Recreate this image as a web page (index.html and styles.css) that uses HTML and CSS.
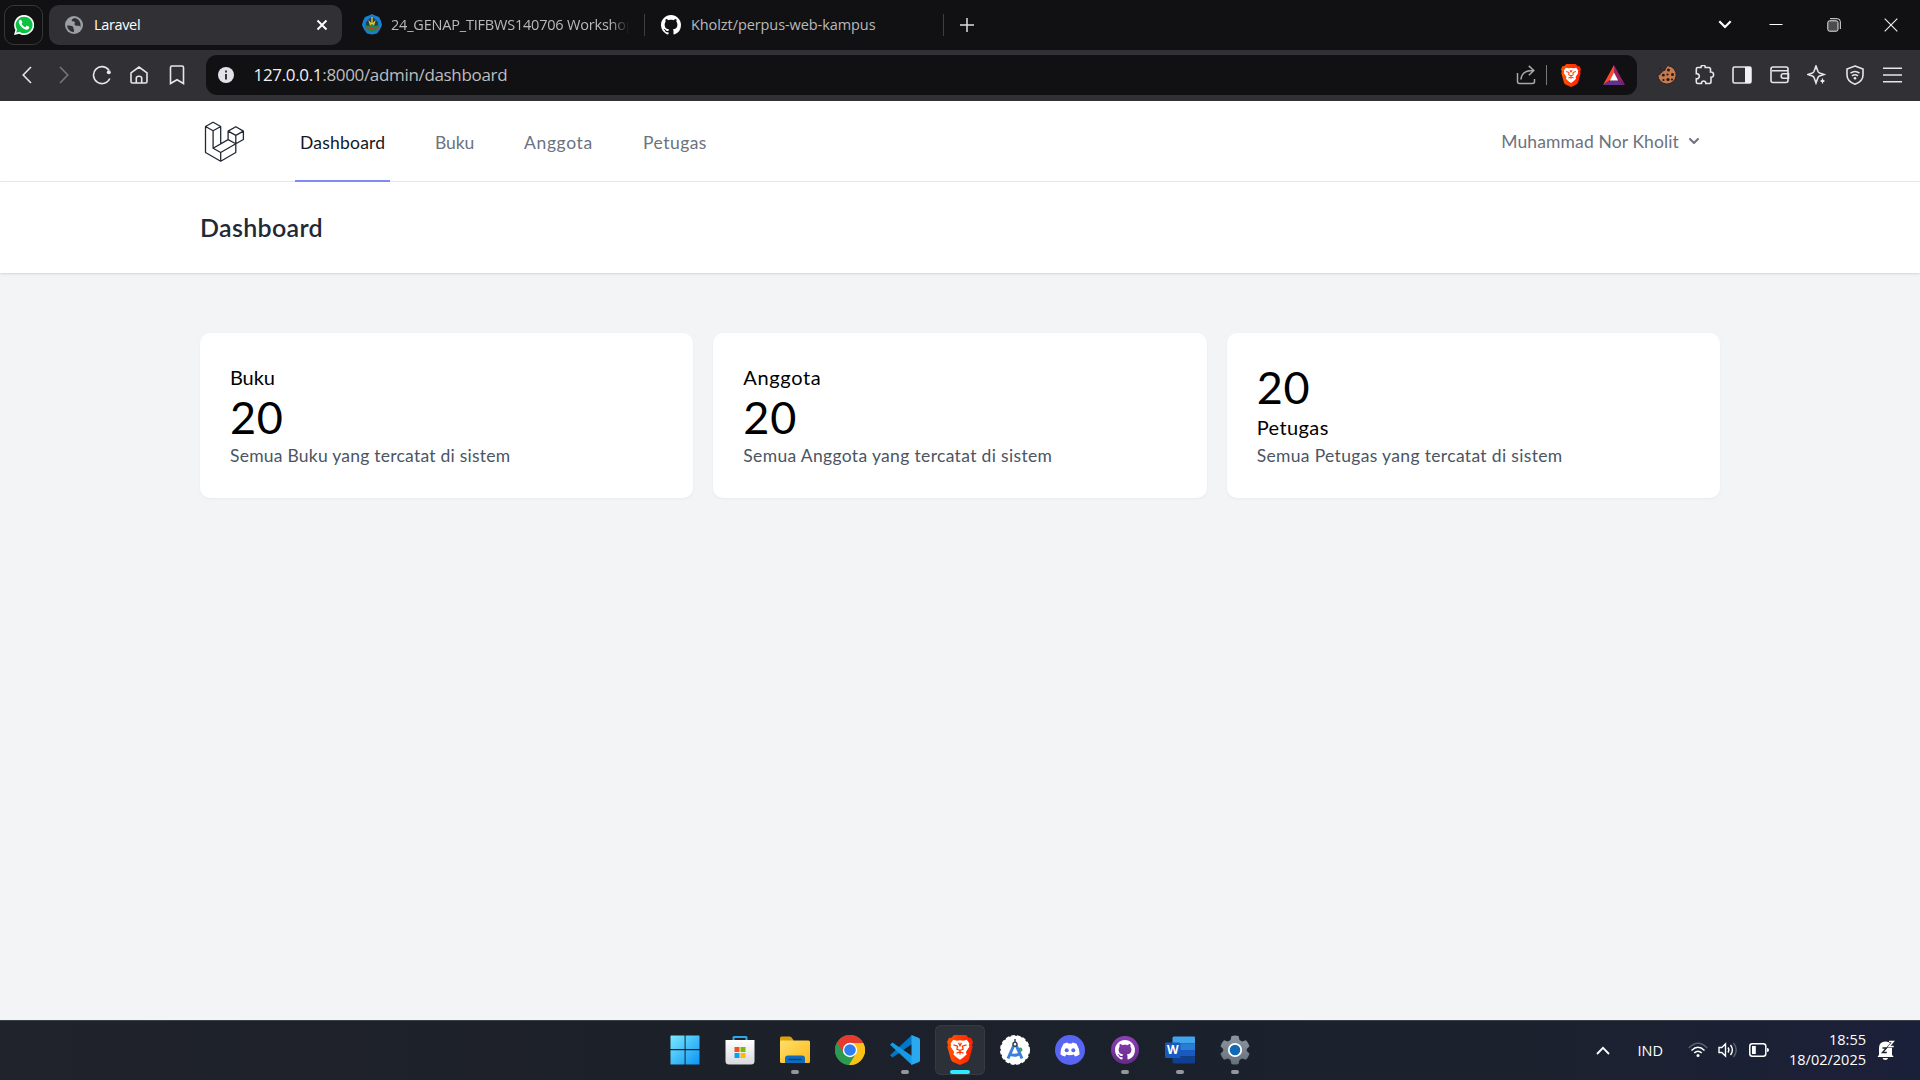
FILE: index.html
```html
<!DOCTYPE html>
<html lang="en">
<head>
<meta charset="utf-8">
<title>Laravel</title>
<link rel="stylesheet" href="styles.css">
</head>
<body>
<svg class="defs" width="0" height="0" aria-hidden="true">
  <defs>
    <linearGradient id="brave-g" x1="0" x2="1"><stop offset="0" stop-color="#ff5500"/><stop offset="1" stop-color="#ff2000"/></linearGradient>
    <linearGradient id="win-g" x1="0" y1="0" x2="1" y2="1"><stop offset="0" stop-color="#7aeaff"/><stop offset="1" stop-color="#0a94f5"/></linearGradient>
    <linearGradient id="store-g" x1="0" y1="0" x2="0" y2="1"><stop offset="0" stop-color="#fff"/><stop offset="1" stop-color="#d9d9dc"/></linearGradient>
    <linearGradient id="folder-g" x1="0" y1="0" x2="1" y2="1"><stop offset="0" stop-color="#ffdf6b"/><stop offset="1" stop-color="#fcb918"/></linearGradient>
    <linearGradient id="gear-g" x1="0" y1="0" x2="0" y2="1"><stop offset="0" stop-color="#8d97a1"/><stop offset="1" stop-color="#66707a"/></linearGradient>
    <linearGradient id="gh-g" x1="0" y1="0" x2="0" y2="1"><stop offset="0" stop-color="#8f3fb5"/><stop offset="1" stop-color="#652a8a"/></linearGradient>
    <symbol id="lion" viewBox="0 0 26 30">
      <path fill="url(#brave-g)" d="M7 0h12l3 3 2-.3L26 7l-1 3 .6 2-3.4 12.2c-.4 1.3-1.2 2-2.2 2.700L13 30l-7-3.100c-1-.7-1.800-1.400-2.200-2.700L.4 12 1 10 0 7l2-4.300 2 .3z"/>
      <path fill="#fff" d="M13 5.200l3.200.5 3.600-.9 2.600 3.600-.6 2.200.7 1-3.600 5.300.7 2.500-3.400 3L13 24.700l-3.200-2.300-3.400-3 .7-2.500-3.600-5.300.7-1-.6-2.200 2.600-3.600 3.600.9z"/>
      <path fill="none" stroke="#ff3a00" stroke-width="1.300" d="M6.500 9.800l4 1.300-.5 3.200 3 1 3-1-.5-3.200 4-1.300M9.500 18.200l3.500-1.300 3.500 1.300M13 16v3.500M11.600 7.800l1.400 3 1.400-3"/>
    </symbol>
    <symbol id="octocat" viewBox="0 0 16 16"><path d="M8 0C3.580 0 0 3.580 0 8c0 3.540 2.290 6.530 5.470 7.590.4.07.55-.17.55-.38 0-.19-.01-.82-.01-1.490-2.010.37-2.530-.49-2.690-.94-.09-.23-.48-.94-.82-1.130-.28-.15-.68-.52-.01-.53.63-.01 1.080.58 1.230.82.72 1.210 1.870.87 2.330.66.07-.52.28-.87.51-1.070-1.780-.2-3.640-.89-3.640-3.950 0-.87.31-1.590.82-2.150-.08-.2-.36-1.020.08-2.120 0 0 .67-.21 2.200.82.64-.18 1.320-.27 2-.27s1.360.09 2 .27c1.530-1.040 2.200-.82 2.200-.82.44 1.100.16 1.920.08 2.120.51.56.82 1.270.82 2.150 0 3.070-1.870 3.750-3.650 3.950.29.25.54.73.54 1.480 0 1.070-.01 1.930-.01 2.200 0 .21.15.46.55.38A8.010 8.010 0 0016 8c0-4.420-3.580-8-8-8z"/></symbol>
  </defs>
</svg>

<div class="screen">
  <header class="tabs">
    <div class="pinned">
      <svg width="20" height="20" viewBox="0 0 24 24"><path fill="#fff" d="M12 0a12 12 0 00-10.300 18L0 24l6.200-1.600A12 12 0 1012 0z"/><path fill="#0dc143" d="M12 2a10 10 0 00-8.400 15.400L2.700 21.200l3.900-1A10 10 0 1012 2z"/><path fill="#fff" d="M8.700 6.400c-.3-.6-.6-.6-1-.6-1.200.1-2 1.300-2 2.700 0 3.200 5 9.200 9.500 9.200 1.800 0 3.200-1.100 3.200-2.900 0-.5-2.800-1.900-3.200-1.800-.6.100-1.100 1.700-1.600 1.700-1.400-.3-4.200-2.900-4.500-4.200 0-.4 1-1.100 1.100-1.600z"/></svg>
    </div>
    <div class="tab tab-active">
      <svg width="18" height="18" viewBox="0 0 18 18"><circle cx="9" cy="9" r="9" fill="#9aa0a6"/><path fill="#313135" d="M2 9.600c2 0 5 .1 6 1.200.8.900.2 2.200 1 3 .4.400 0 1.500-.5 2.400A7.200 7.200 0 012 9.600zM9.500 2c-1.500 1-3.300 1.200-2.700 2.800.6 1.100 2.400.1 2.900 1.300.6 1.500-1 2.100.4 3.200 1.100.9 3.400-.3 4.800 1 .4.500.2 1.600-.4 2.600A7.200 7.200 0 009.500 2z"/></svg>
      <span class="tab-title tight">Laravel</span>
      <svg class="tab-close" width="12" height="12" viewBox="0 0 12 12"><path stroke="#fff" stroke-width="1.900" d="M1.500 1.500l9 9m0-9l-9 9"/></svg>
    </div>
    <div class="tab tab-workshop">
      <svg width="20" height="21" viewBox="0 0 20 21"><path fill="#1581d5" d="M10 0l3 1.500 4 1.500 2 4 1 4-2 4.500-3 4L10 20.500 5 19.500l-3-4L0 11l1-4 2-4 4-1.500z"/><path fill="#263f4c" d="M4 8l3-3 3-2.500L13 5l3 3 .5 5H3.500z"/><path fill="#e3c62e" d="M9.300 3h1.400v6l3-3-2 7H8.300l-2-7 3 3z"/><path fill="#22874a" d="M3 11l4 1 3-2 3 2 4-1-1 5-6 2-6-2z"/><path fill="none" stroke="#ca3540" stroke-width="1.300" d="M3 14l4-.5 3 1.500 3-1.500 4 .5"/></svg>
      <span class="tab-title fade">24_GENAP_TIFBWS140706 Workshop</span>
    </div>
    <div class="tab tab-github">
      <svg width="20" height="20" fill="#fff"><use href="#octocat"/></svg>
      <span class="tab-title">Kholzt/perpus-web-kampus</span>
    </div>
    <div class="new-tab"><svg width="14" height="14" viewBox="0 0 14 14"><path stroke="#ddd" stroke-width="1.500" d="M7 0v14M0 7h14"/></svg></div>
    <div class="window-controls">
      <span class="tab-search"><svg width="14" height="9" viewBox="0 0 14 9"><path fill="none" stroke="#fff" stroke-width="2.200" d="M1.300 1.300L7 7l5.700-5.700"/></svg></span>
      <span><svg width="14" height="14" viewBox="0 0 14 14"><path stroke="#fff" d="M.5 6.500h13"/></svg></span>
      <span><svg width="14" height="14" viewBox="0 0 14 14" fill="none" stroke="#e8e8e8"><rect x=".8" y="2.800" width="10.200" height="10.400" rx="1.800" fill="#4c4c4f"/><path d="M3 .7h7.300a3 3 0 013 3V11"/></svg></span>
      <span><svg width="14" height="14" viewBox="0 0 14 14"><path stroke="#f2f2f2" stroke-width="1.100" d="M.7.7l12.600 12.600m0-12.600L.7 13.300"/></svg></span>
    </div>
  </header>

  <div class="toolbar">
    <div class="tools">
      <span><svg width="10" height="18" viewBox="0 0 10 18"><path d="M9 1L1.200 9 9 17"/></svg></span>
      <span class="muted"><svg width="10" height="18" viewBox="0 0 10 18"><path d="M1 1l7.800 8L1 17"/></svg></span>
      <span><svg width="20" height="20" viewBox="0 0 20 20"><path d="M17.800 13.500A8.500 8.500 0 1117 5.300"/><circle cx="16.800" cy="7.300" r="2" fill="#eaeaec" stroke="none"/></svg></span>
      <span><svg width="18" height="18" viewBox="0 0 18 18"><path d="M1 6.800L9 1l8 5.800v8.700q0 1.500-1.500 1.500h-13Q1 17 1 15.500zM6.300 17v-5q0-1.700 2.700-1.700t2.700 1.700v5"/></svg></span>
      <span><svg width="16" height="20" viewBox="0 0 16 20"><path d="M1.500 2.500q0-1.500 1.500-1.500h10q1.500 0 1.500 1.500V18.500L8 14.700 1.500 18.500z"/></svg></span>
    </div>
    <div class="address">
      <svg width="16" height="16" viewBox="0 0 16 16"><circle cx="8" cy="8" r="8" fill="#e2e2e8"/><path stroke="#222225" stroke-width="1.800" d="M8 3.600v2M8 7v5.400"/></svg>
      <span class="url"><b>127.0.0.1</b>:8000/admin/dashboard</span>
      <div class="address-end">
        <svg width="20" height="20" viewBox="0 0 20 20" fill="none" stroke="#a9a9ac" stroke-width="1.500"><path d="M1.500 8v8.500q0 2 2 2h13q2 0 2-2V14"/><path d="M5 14.500C5.300 8.500 9 5.500 17 5.500M12.800.9l5 4.600-5 4.800"/></svg>
        <i class="bar"></i>
        <svg class="brave" width="20" height="23"><use href="#lion"/></svg>
        <svg width="22" height="20" viewBox="0 0 22 20"><path fill="#ff4a26" d="M11 0v8L7.200 15 0 20z"/><path fill="#9e1f63" d="M11 0v8l3.800 7 7.200 5z"/><path fill="#66308f" d="M0 20l7.200-4.800h7.600L22 20z"/><path fill="#fff" d="M11 7.500l4.200 8H6.800z"/></svg>
      </div>
    </div>
    <div class="tools extensions">
      <span><svg width="20" height="20" viewBox="0 0 20 20"><path fill="#c57b4d" stroke="#292020" stroke-width="1" d="M10 .8h1.500A9.200 9.200 0 11.800 10q2.500.3 2.500-2 2-.2 2-2 3 .2 3.300-2.500z"/><g fill="#24191a" stroke="none"><circle cx="11.500" cy="5" r="1.500"/><circle cx="6.300" cy="10.200" r="1.400"/><circle cx="10.500" cy="9.500" r="1.100"/><circle cx="15.500" cy="9.500" r="1.500"/><circle cx="6.500" cy="15" r="1.100"/><circle cx="11" cy="14.500" r="1.600"/><circle cx="15" cy="14.500" r="1.100"/><circle cx="3" cy="3.500" r=".8"/></g></svg></span>
      <span><svg width="20" height="20" viewBox="0 0 20 20"><path d="M1.300 4q0-1.500 1.500-1.500H6c-.6-3 4.800-3 4.300 0h3.500q1.700 0 1.700 1.700V7c4-.7 4 5.700.5 5.200v4.600q0 1.700-1.700 1.700h-3.500c.4-3.400-4.800-3.400-4.300 0H2.800q-1.500 0-1.500-1.500v-3.300c4 .6 4-5.500 0-5z"/></svg></span>
      <span><svg width="20" height="18" viewBox="0 0 20 18"><rect x="1" y="1" width="18" height="16" rx="1.500"/><path fill="#f2f2f4" stroke="none" d="M13 1h6v16h-6z"/></svg></span>
      <span><svg width="20" height="18" viewBox="0 0 20 18"><path d="M18 4.800V3q0-2-2-2H3Q1 1 1 3v11.500q0 2 2 2h13q2 0 2-2V4.800H2M18.500 7.800h-5.300q-2 0-2 2.200t2 2.200h5.300z"/></svg></span>
      <span><svg width="20" height="20" viewBox="0 0 20 20"><path d="M9 1l1.900 5.200q.5 1.200 1.700 1.700L17 9.500l-4.400 1.600q-1.200.5-1.700 1.700L9 18l-1.900-5.200q-.5-1.200-1.700-1.700L1 9.500l4.400-1.600q1.200-.5 1.700-1.700z"/><path stroke="#313135" stroke-width="1" fill="#eee" d="M15.500 11.800l1.200 3 3 1.200-3 1.200-1.200 3-1.200-3-3-1.200 3-1.200z"/></svg></span>
      <span><svg width="18" height="20" viewBox="0 0 18 20"><path d="M9 1l8 3v6c0 5-4 7.800-8 9.200C5 17.800 1 15 1 10V4zM4.500 8.200q4.500-3.400 9 0M6 10.800q3-2.200 6 0"/><circle cx="9" cy="13.200" r="1.300" fill="#eee" stroke="none"/></svg></span>
      <span><svg width="19" height="16" viewBox="0 0 19 16"><path d="M0 1.200h19M0 8h19M0 14.700h19"/></svg></span>
    </div>
  </div>

  <div class="app">
    <nav class="nav">
      <div class="container nav-row">
        <svg class="logo" width="45" height="45" viewBox="0 0 45 45"><path d="M5.500 7.500l7.600-4.300 7.600 4.300-7.600 4.300zM5.500 7.500v26l15.200 8.700 15.100-8.700v-8.700l-15.100 8.700-7.600-4.300V11.800M20.700 33.500v8.700M20.700 7.500v17.300M28.100 12.100l7.700-4.400 7.600 4.400-7.600 4.300zM28.100 12.100v8.500l7.700 4.200 7.600-4.300v-8.400M35.800 16.400v8.400M28.100 20.600l-15 8.600"/></svg>
        <div class="links">
          <a class="link link-dashboard active">Dashboard</a>
          <a class="link link-buku">Buku</a>
          <a class="link link-anggota">Anggota</a>
          <a class="link link-petugas">Petugas</a>
        </div>
        <div class="user">Muhammad Nor Kholit
          <svg width="20" height="20" viewBox="0 0 20 20"><path fill="#6b7280" fill-rule="evenodd" d="M5.293 7.293a1 1 0 011.414 0L10 10.586l3.293-3.293a1 1 0 111.414 1.414l-4 4a1 1 0 01-1.414 0l-4-4a1 1 0 010-1.414z"/></svg>
        </div>
      </div>
    </nav>
    <section class="heading"><div class="container"><h1>Dashboard</h1></div></section>
    <main class="container cards">
      <article class="card"><h2 class="name-buku">Buku</h2><strong>20</strong><p>Semua Buku yang tercatat di sistem</p></article>
      <article class="card"><h2 class="name-anggota">Anggota</h2><strong>20</strong><p class="wide">Semua Anggota yang tercatat di sistem</p></article>
      <article class="card"><strong>20</strong><h2>Petugas</h2><p class="wide">Semua Petugas yang tercatat di sistem</p></article>
    </main>
  </div>

  <footer class="taskbar">
    <div class="side"></div>
    <div class="dock">
      <span><svg width="30" height="30" viewBox="0 0 30 30"><path fill="url(#win-g)" d="M1 .5h13.600V14H.5V1zM15.600.5H29q.5 0 .5.500v13H15.600zM.5 15.200h14.100v14.300H1q-.5 0-.5-.5zM15.600 15.200h13.900V29q0 .5-.5.500H15.600z"/></svg></span>
      <span><svg width="30" height="30" viewBox="0 0 30 30"><path fill="none" stroke="#2ba8e4" stroke-width="2" d="M8.500 6V2.500q0-.5.500-.5h12q.5 0 .5.500V6"/><path fill="url(#store-g)" d="M.5 5.500q0-.5.500-.5h28q.5 0 .5.500V26q0 3.500-3.500 3.500H4Q.5 29.500.5 26z"/><path fill="#f25022" d="M9.500 12h5v5h-5z"/><path fill="#7fba00" d="M15.500 12h5v5h-5z"/><path fill="#00a4ef" d="M9.500 18h5v5h-5z"/><path fill="#ffb900" d="M15.500 18h5v5h-5z"/></svg></span>
      <span class="running"><svg width="30" height="28" viewBox="0 0 30 28"><path fill="#e0a106" d="M0 2q0-1.500 1.500-1.500h8q1 0 1.700.7L13.500 4v4H0z"/><path fill="url(#folder-g)" d="M0 8.500V5.500Q0 4.500 1 4.500h27.500Q30 4.500 30 6v19.500q0 1.500-1.500 1.500h-27Q0 27 0 25.500z"/><path fill="#0f6cbd" d="M5 27v-4.500q0-3 3-3h14q3 0 3 3V27z"/><path stroke="#073e78" stroke-width="1.300" d="M8.500 23.500h13"/></svg></span>
      <span><svg width="30" height="30" viewBox="0 0 30 30"><circle cx="15" cy="15" r="15" fill="#34a853"/><path fill="#2c9950" d="M2 7.500A15 15 0 0014 30l7-11.500H9z"/><path fill="#fbc116" d="M15 8h13.300A15 15 0 0114 30l7-11.500z"/><path fill="#e33b2e" d="M2 7.500a15 15 0 0126.300.5H15a7 7 0 00-6.200 10.500z"/><circle cx="15" cy="15" r="7.200" fill="#fff"/><circle cx="15" cy="15" r="5.800" fill="#2f7df0"/></svg></span>
      <span class="running"><svg width="30" height="30" viewBox="0 0 30 30"><path fill="#0078c9" d="M22 0L0 20.200 2.500 22.500 22 9z"/><path fill="#159ae5" d="M22 30L0 9.800 2.500 7.500 22 21z"/><path fill="#2aa9f1" d="M21.500 0L29 3q1 .5 1 1.700v20.600q0 1.200-1 1.700l-7.500 3z"/></svg></span>
      <span class="running current"><svg width="26" height="30"><use href="#lion"/></svg></span>
      <span><svg width="30" height="30" viewBox="0 0 30 30"><circle cx="15" cy="15" r="14.200" fill="#fff" stroke="#fff" stroke-width="1.600" stroke-dasharray="3.700 2"/><path fill="#3ca45a" d="M18 13q5-2 4.300 3l-4 2z"/><path fill="none" stroke="#3d80dc" stroke-width="3" d="M14 10L8 23.500M16 10l6 13.500M9 19q6 3 12-1"/><circle cx="15" cy="9.300" r="2" fill="#fff" stroke="#344455" stroke-width="1.500"/><path stroke="#344455" stroke-width="1.500" d="M15 4v3"/></svg></span>
      <span><svg width="30" height="30" viewBox="0 0 30 30"><circle cx="15" cy="15" r="15" fill="#5865f2"/><path fill="#fff" d="M8.500 8.700q1.800-1 4-1.200l.6 1.100q1.900-.3 3.800 0l.6-1.100q2.200.2 4 1.200 3.200 5 3.100 10.500-2 1.700-4.600 2.300l-1.200-1.900q-3.800 1.400-7.600 0L10 21.500q-2.600-.6-4.600-2.300-.1-5.500 3.100-10.500z"/><circle cx="11.700" cy="15.200" r="2" fill="#5865f2"/><circle cx="18.300" cy="15.200" r="2" fill="#5865f2"/></svg></span>
      <span class="running"><svg width="28" height="28" viewBox="0 0 28 28"><circle cx="14" cy="14" r="14" fill="url(#gh-g)"/><svg x="4" y="4" width="20" height="20" fill="#fff"><use href="#octocat"/></svg></svg></span>
      <span class="running"><svg width="30" height="28" viewBox="0 0 30 28"><path fill="#41a5ee" d="M9 .5h20q1 0 1 1v6H7.500v-5.500q0-1.500 1.500-1.500z"/><path fill="#2b7cd3" d="M7.500 7.500H30V14H7.500z"/><path fill="#185abd" d="M7.500 14H30v6.500H7.500z"/><path fill="#103f91" d="M7.500 20.500H30v6q0 1-1 1H9q-1.500 0-1.500-1.500z"/><rect y="6.500" width="15.500" height="15.500" rx="1.500" fill="#185abd"/><text x="7.700" y="18.300" text-anchor="middle" class="word">W</text></svg></span>
      <span class="running"><svg width="30" height="30" viewBox="0 0 30 30"><path fill="url(#gear-g)" d="M11.500 1q3.500-1 7 0l1 4 2.500 1.500 4-1.200q2.500 2.700 3.500 6L26.800 14v2l2.700 2.700q-1 3.300-3.500 6l-4-1.200-2.500 1.500-1 4q-3.500 1-7 0l-1-4L8 23.500l-4 1.200q-2.500-2.700-3.500-6L3.200 16v-2L.5 11.300q1-3.300 3.500-6l4 1.200L10.500 5z"/><circle cx="15" cy="15" r="6.200" fill="#0f69b7" stroke="#fff" stroke-width="1.800"/></svg></span>
    </div>
    <div class="side tray">
      <svg class="up" width="14" height="9" viewBox="0 0 14 9"><path fill="none" stroke="#fff" stroke-width="1.800" d="M1 8l6-6.200L13 8"/></svg>
      <span class="lang">IND</span>
      <svg class="wifi" width="20" height="16" viewBox="0 0 20 16" fill="none" stroke="#fff" stroke-width="1.500"><path stroke="#5a606c" d="M.8 6q9.200-9.500 18.400 0"/><path d="M3.500 8.500q6.500-6.500 13 0M6.200 11q3.800-3.600 7.600 0"/><circle cx="10" cy="13.500" r="1.500" fill="#fff" stroke="none"/></svg>
      <svg class="sound" width="20" height="16" viewBox="0 0 20 16" fill="none" stroke="#fff" stroke-width="1.400"><path d="M1 5.500h2.800L7.500 2v12l-3.700-3.500H1z"/><path d="M10 5.500q1.800 2.500 0 5M12.500 3q3.800 5 0 10"/><path stroke="#5a606c" d="M15.500 1q5.500 7 0 14"/></svg>
      <svg class="battery" width="20" height="14" viewBox="0 0 20 14"><rect x=".8" y=".8" width="16" height="12.400" rx="2.500" fill="none" stroke="#fff" stroke-width="1.500"/><path fill="#fff" d="M3 3h3.800v8H3zM18 5q2 0 2 2t-2 2z"/></svg>
      <div class="clock"><span>18:55</span><span>18/02/2025</span></div>
      <svg class="bell" width="18" height="20" viewBox="0 0 18 20"><path fill="#fff" d="M2 15V8q0-6.500 6.500-6.500T15 8v7l1.300 1.200v.8H.8v-.8zM5.500 18h5.600q-.6 2-2.800 2t-2.800-2z"/><path fill="none" stroke="#1b2130" stroke-width="1.400" d="M5.500 8h4l-4 4.500h4.300"/><path fill="none" stroke="#1b2130" stroke-width="2.600" d="M12 1.500h4.300L12 6.500h4.700"/><path fill="none" stroke="#fff" stroke-width="1.500" d="M12 1.500h4.300L12 6.500h4.700"/></svg>
    </div>
  </footer>
</div>
</body>
</html>
```
FILE: styles.css
```css
* { box-sizing: border-box; }
body { margin: 0; overflow: hidden; font-family: Lato, sans-serif; }
svg { display: block; flex: none; }
.defs { position: absolute; }
h1, h2, p { margin: 0; }
.screen { width: 1920px; height: 1080px; display: flex; flex-direction: column; }

/* Browser chrome */
.tabs, .toolbar, .taskbar { font-family: "Open Sans", sans-serif; flex: none; display: flex; }
.tabs { height: 50px; background: #111113; align-items: center; padding: 0 0 1px 4px; }
.pinned { width: 39px; height: 40px; border: 1.500px solid #37373a; border-radius: 10px; display: flex; align-items: center; justify-content: center; margin-right: 6px; }
.tab { height: 40px; display: flex; align-items: center; font-size: 14.500px; letter-spacing: -.12px; color: #b9b9bb; }
.tab-active { width: 293px; background: #313135; border-radius: 10px; padding: 0 14px 0 16px; color: #fff; }
.tab-active .tab-title { margin-left: 11px; }
.tab-close { margin-left: auto; }
.tight { letter-spacing: -.35px; }
.tab-title { white-space: nowrap; }
.tab-workshop { width: 303px; padding: 0 15px 0 20px; height: 22px; border-right: 1px solid #3e3e41; letter-spacing: -.2px; }
.fade { margin-left: 9px; width: 238px; overflow: hidden; mask-image: linear-gradient(90deg, #000 92%, transparent); }
.tab-github { width: 299px; padding-left: 16px; height: 22px; border-right: 1px solid #3e3e41; letter-spacing: -.08px; }
.tab-github .tab-title { margin-left: 10px; }
.new-tab { margin-left: 16px; }
.window-controls { display: flex; margin-left: auto; }
.window-controls span { width: 57.500px; display: flex; align-items: center; justify-content: center; }
.window-controls .tab-search { width: 45px; }

.toolbar { height: 51px; background: #313135; align-items: center; padding: 0 9px 1px 8px; }
.tools { display: flex; }
.tools span { width: 37.500px; height: 40px; display: flex; align-items: center; justify-content: center; }
.tools svg { fill: none; stroke: #e6e6e8; stroke-width: 1.600; }
.tools .muted svg { stroke: #77777b; }
.address { width: 1432px; height: 40px; margin-left: 10px; background: #111113; border-radius: 11px; display: flex; align-items: center; padding: 0 12px; }
.url { margin-left: 20px; font-size: 17px; letter-spacing: -.33px; color: #bdbdc0; padding-bottom: 1px; }
.url b { font-weight: 400; color: #f0f0f2; }
.address-end { margin-left: auto; display: flex; align-items: center; }
.bar { width: 1px; height: 20px; background: #77777a; margin: 0 14px 0 10px; }
.brave { margin-right: 22px; }
.extensions { margin-left: 12px; }

/* Application */
.app { flex: 1; background: #f3f4f6; }
.container { width: 1600px; margin: 0 auto; padding: 0 40px; }
.nav { background: #fff; border-bottom: 1px solid #ececef; height: 81px; }
.nav-row { display: flex; height: 81px; }
.logo { margin: 18px 0 0; fill: none; stroke: #1f2937; stroke-width: 1.300; stroke-linejoin: round; }
.links { display: flex; gap: 40px; margin-left: 50px; }
.link { padding: 4px 0 0 5px; height: 81px; display: flex; align-items: center; font-size: 17.500px; color: #6b7280; border-bottom: 2px solid transparent; }
.link-dashboard { width: 95px; letter-spacing: .22px; }
.link-buku { width: 49px; letter-spacing: -.1px; }
.link-anggota { width: 79px; letter-spacing: .65px; }
.link-petugas { width: 74px; letter-spacing: .47px; }
.link.active { color: #111827; border-color: #818cf8; }
.user { margin-left: auto; margin-right: 16px; display: flex; align-items: center; gap: 5px; font-size: 17.500px; letter-spacing: .12px; color: #6b7280; padding-bottom: 1px; }
.heading { position: relative; background: #fff; height: 91px; box-shadow: 0 1px 3px rgba(0,0,0,.1), 0 1px 2px -1px rgba(0,0,0,.1); display: flex; align-items: center; }
h1 { font-size: 25px; font-weight: 600; line-height: 31px; letter-spacing: .32px; color: #1f2937; padding-bottom: 1px; }
.cards { display: grid; grid-template-columns: repeat(3, 1fr); gap: 20px; padding-top: 60px; }
.card { background: #fff; border-radius: 10px; padding: 29px 30px 30px; height: 165px; box-shadow: 0 1px 3px rgba(0,0,0,.045); color: #000; }
.card h2 { font-size: 20px; font-weight: 400; line-height: 30px; letter-spacing: .39px; }
.card .name-buku { letter-spacing: -.1px; }
.card .name-anggota { letter-spacing: .65px; }
.card strong { display: block; font-size: 45px; font-weight: 400; line-height: 50px; letter-spacing: .7px; }
.card p { padding-top: 1px; font-size: 17.500px; line-height: 26px; letter-spacing: .24px; color: #4b5563; }
.card .wide { letter-spacing: .34px; }

/* Taskbar */
.taskbar { height: 60px; background: linear-gradient(90deg, #20232b, #1c2029 35%, #1b222e 80%, #1b203a); border-top: 1px solid #3b4048; align-items: center; color: #fff; padding-bottom: 1px; }
.side { flex: 1; padding-right: 25px; }
.taskbar .side:first-child { padding-right: 25px; }
.dock { display: flex; gap: 5px; }
.dock > span { position: relative; width: 50px; height: 50px; border-radius: 6px; display: flex; align-items: center; justify-content: center; }
.dock .current { background: #2c3039; box-shadow: inset 0 0 0 1px #363a43; }
.dock .running::after { content: ""; position: absolute; left: 21px; bottom: 1px; width: 8px; height: 4px; border-radius: 2px; background: #95979c; }
.dock .current::after { left: 15px; width: 20px; background: #2eeaff; }
.word { font: 700 12px "Open Sans", sans-serif; fill: #fff; }
.tray { display: flex; align-items: center; justify-content: flex-end; font-size: 14.500px; }
.lang { margin: 0 25px 0 28px; }
.sound { margin-left: 10px; }
.battery { margin-left: 11px; }
.clock { display: flex; flex-direction: column; align-items: flex-end; line-height: 20px; margin: 0 11px 0 20px; }
```
